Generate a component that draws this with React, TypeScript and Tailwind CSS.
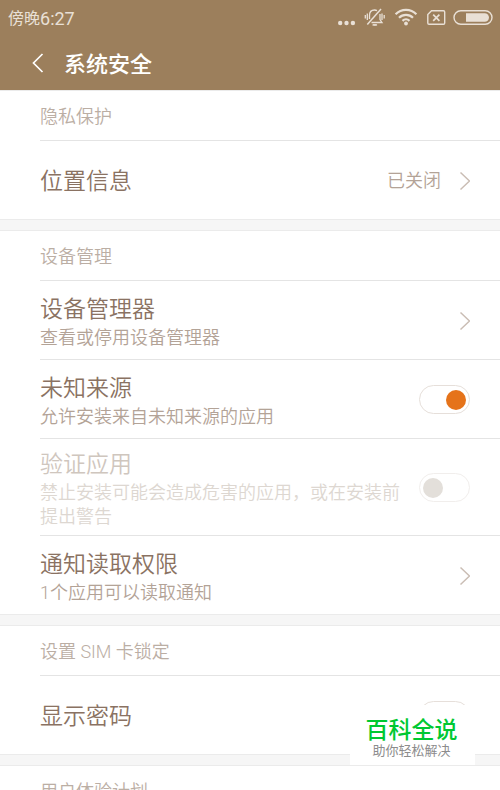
import React, { useId, useState } from 'react';

type Tone = 'normal' | 'disabled';

function Chevron() {
  return (
    <svg className="h-5 w-3 shrink-0" viewBox="0 0 12 20" fill="none" stroke="#cabdb4" strokeWidth="1.5" aria-hidden="true">
      <path d="M2.5 1.500 11.500 10l-9 8.500" />
    </svg>
  );
}

function StatusIcons() {
  return (
    <svg className="h-5 w-[156px]" viewBox="337 8 156 20" fill="none" stroke="#e9e0d6" role="img" aria-label="静音 无线网络 无SIM卡 电池">
      <g fill="#e9e0d6" stroke="none">
        <circle cx="340.2" cy="23" r="2.2" />
        <circle cx="346.5" cy="23" r="2.2" />
        <circle cx="352.9" cy="23" r="2.2" />
      </g>
      <g strokeWidth="1.3">
        <path d="M369.500 19v-3.500c0-3.500 2-5.500 5-5.500 1 0 1.800.2 2.500.6M380 14v5.500l2 3h-10.500" />
        <path d="M381 9 367.300 24.600" strokeWidth="1.500" />
        <path d="M367.300 13.500v6.500M365.300 15v3.500M382 13.500v6.500M384.200 15v3.500" />
        <path d="M372.800 24.300h4c-.8 1.600-3.200 1.600-4 0z" fill="#e9e0d6" stroke="none" />
        <path d="M372.500 25h4.600" />
      </g>
      <g strokeWidth="2.200">
        <path d="M395.600 14.300a14.600 14.600 0 0 1 20.800 0" />
        <path d="M399 17.800a9.800 9.800 0 0 1 14 0" />
        <path d="M402.500 20.900a5 5 0 0 1 7 0" />
      </g>
      <circle cx="406" cy="23.500" r="1.900" fill="#e9e0d6" stroke="none" />
      <path d="M431.500 10.800h12a1.200 1.200 0 0 1 1.200 1.200v11a1.200 1.200 0 0 1-1.200 1.200H429a1.200 1.200 0 0 1-1.200-1.200v-8.500z" strokeWidth="1.400" />
      <path d="m433.200 14.700 6.200 6.200m0-6.200-6.200 6.200" strokeWidth="1.700" />
      <rect x="454" y="10.700" width="38" height="13.600" rx="6.800" strokeWidth="1.400" />
      <path d="M466 13.200h18.700a4.300 4.300 0 0 1 0 8.600H466z" fill="#e9e0d6" stroke="none" />
    </svg>
  );
}

function Section({ title, children }: { title: string; children?: React.ReactNode }) {
  return (
    <section className="mb-2.5 border-y border-[#ebebeb] bg-white">
      <h2 className="ml-10 flex h-[50px] items-center border-b border-[#e4e4e4] pt-0.5 text-lg font-[350] text-[#bbaea4]">{title}</h2>
      <div>{children}</div>
    </section>
  );
}

function RowText({ title, note, tone = 'normal' }: { title: string; note?: string; tone?: Tone }) {
  const off = tone === 'disabled';
  return (
    <span className="flex flex-1 flex-col pt-[3px] text-left font-[350]">
      <span className={`text-[23px] leading-8 ${off ? 'text-[#cfc6be]' : 'text-[#8a7262]'}`}>{title}</span>
      {note && <span className={`text-lg leading-6 ${off ? 'text-[#ddd7d1]' : 'text-[#b3a397]'}`}>{note}</span>}
    </span>
  );
}

const rowClass =
  'ml-10 flex min-h-[79px] items-center border-b border-[#e4e4e4] pt-[7px] pb-1.5 pr-[30px] last:min-h-[78px] last:border-b-0';

function LinkRow({ title, note, value }: { title: string; note?: string; value?: string }) {
  return (
    <div className={rowClass}>
      <button type="button" className="flex flex-1 items-center">
        <RowText title={title} note={note} />
        {value && <span className="mr-[17px] text-lg font-[350] text-[#b3a397]">{value}</span>}
        <Chevron />
      </button>
    </div>
  );
}

function SwitchRow({ title, note, initial, disabled }: { title: string; note?: string; initial: boolean; disabled?: boolean }) {
  const id = useId();
  const [on, setOn] = useState(initial);
  return (
    <div className={rowClass}>
      <label htmlFor={id} className="flex flex-1 pr-[18px]">
        <RowText title={title} note={note} tone={disabled ? 'disabled' : 'normal'} />
      </label>
      <input
        id={id}
        type="checkbox"
        role="switch"
        checked={on}
        disabled={disabled}
        onChange={(e) => setOn(e.target.checked)}
        className="flex h-[29px] w-[51px] shrink-0 appearance-none items-center rounded-full border border-[#e6dfda] bg-white px-[3px] before:size-5 before:rounded-full before:bg-[#e3dfda] checked:justify-end checked:before:bg-[#e5731a] disabled:border-[#f1eeec]"
      />
    </div>
  );
}

export default function App() {
  return (
    <div className="h-screen overflow-hidden bg-[#f6f6f6] font-['Roboto','Noto_Sans_CJK_SC',sans-serif]">
      <header className="bg-[#9c7f5c]">
        <div className="flex h-9 items-center justify-between pr-[7px] pl-2 text-[#e9e0d6]">
          <p className="flex items-center pt-0.5 text-base">
            傍晚<span className="text-lg">6:27</span>
          </p>
          <StatusIcons />
        </div>
        <div className="flex h-[54px] items-center pl-8">
          <button type="button" aria-label="返回">
            <svg className="h-5 w-3" viewBox="0 0 12 20" fill="none" stroke="#fff" strokeWidth="1.7" aria-hidden="true">
              <path d="M10.500 1 1.500 10l9 9" />
            </svg>
          </button>
          <h1 className="ml-5 pt-0.5 text-[22px] font-medium text-white">系统安全</h1>
        </div>
      </header>
      <main>
        <Section title="隐私保护">
          <LinkRow title="位置信息" value="已关闭" />
        </Section>
        <Section title="设备管理">
          <LinkRow title="设备管理器" note="查看或停用设备管理器" />
          <SwitchRow title="未知来源" note="允许安装来自未知来源的应用" initial={true} />
          <SwitchRow title="验证应用" note="禁止安装可能会造成危害的应用，或在安装前提出警告" initial={false} disabled />
          <LinkRow title="通知读取权限" note="1个应用可以读取通知" />
        </Section>
        <Section title="设置 SIM 卡锁定">
          <SwitchRow title="显示密码" initial={true} />
        </Section>
        <Section title="用户体验计划" />
      </main>
      <aside className="fixed right-[25px] bottom-[25px] flex h-[60px] w-[125px] flex-col items-center justify-end bg-white pr-0.5 pb-1.5">
        <p className="text-[23px] leading-6 font-medium text-[#00c832]">百科全说</p>
        <p className="text-[13px] leading-4 text-[#8c8c8c]">助你轻松解决</p>
      </aside>
    </div>
  );
}
